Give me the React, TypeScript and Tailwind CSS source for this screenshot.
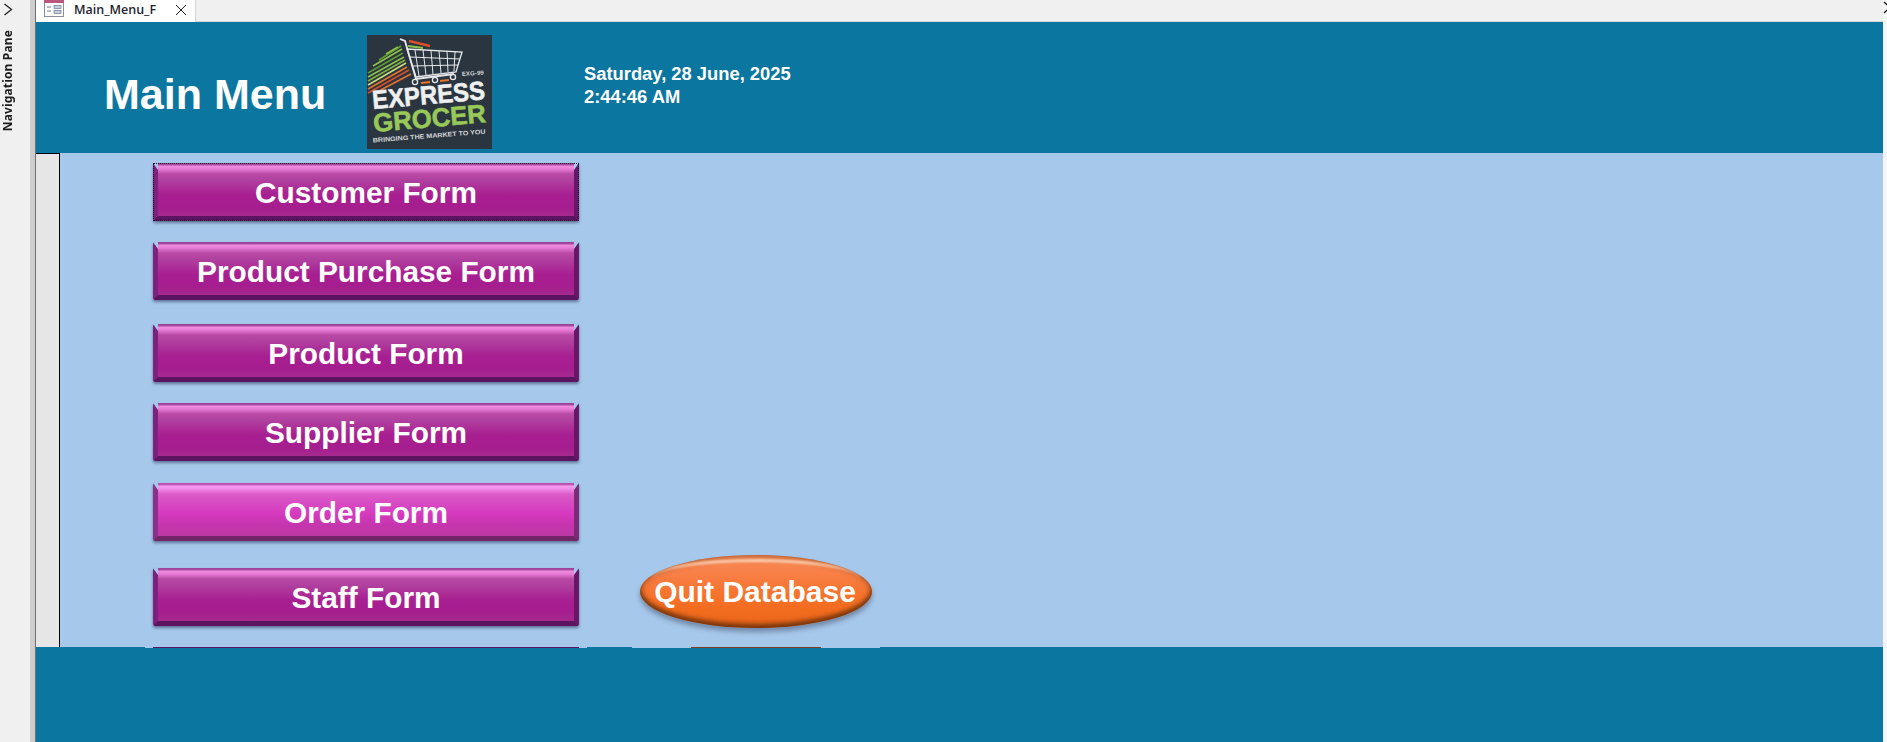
import React from "react";

const sans = "font-['Liberation_Sans',Arial,sans-serif]";

function Logo() {
  const stripes: [string, number, number, number, number][] = [
    ["#d9502a", 1, 58, 42, 35],
    ["#e8742c", 8, 58, 44, 39],
    ["#e8742c", 1, 54, 40, 32],
    ["#c9dc7a", 1, 50, 39, 28],
    ["#7fb23e", 1, 46, 38, 25],
    ["#8ec24a", 1, 42, 37, 22],
    ["#5f9a32", 1, 38, 36, 18],
    ["#8ec24a", 6, 31, 35, 14],
    ["#5f9a32", 12, 25, 34, 11],
    ["#8ec24a", 19, 19, 31, 12],
  ];
  return (
    <svg viewBox="0 0 125 114" className="w-[125px] h-[114px] ml-[41px] shrink-0">
      <rect width="125" height="114" fill="#2b3540" />
      <g className="blur-[0.3px]">
        {stripes.map(([c, a, b, d, e], i) => (
          <line key={i} x1={a} y1={b} x2={d} y2={e} stroke={c} strokeWidth="1.6" />
        ))}
        <g fill="none" stroke="#e6e9ea" strokeWidth="1.3">
          <path d="M33 4l5 2 11 38 38-5" strokeWidth="1.8" />
          <path d="M40 14l55 3-6 20-40 5z" />
          <path d="M48 15l4 26M56 15l3 25M64 16l2 23M72 16l2 22M80 16l1 21M88 17l-1 19M43 22l50 2M46 31l45-1" strokeWidth="1" />
          <circle cx="48" cy="47" r="2.6" />
          <circle cx="68" cy="45" r="2.6" />
          <circle cx="86" cy="42" r="2.6" />
        </g>
        <path d="M42 6l21 5" stroke="#d9502a" strokeWidth="2.6" />
        <path d="M41 11l15 2" stroke="#8ec24a" strokeWidth="2" />
        <path d="M54 48l9-1M73 46l9-1" stroke="#e8742c" strokeWidth="2" />
      </g>
      <text x="95" y="41" fontSize="6" fill="#d5d8da" fontFamily="Liberation Sans" fontWeight="700" textLength="22" transform="rotate(-4 95 41)">EXG-99</text>
      <text x="6" y="74" fontSize="26" fill="#eef0f0" stroke="#eef0f0" strokeWidth="0.6" fontFamily="Liberation Sans" fontWeight="700" textLength="113" lengthAdjust="spacingAndGlyphs" transform="rotate(-5 6 74)">EXPRESS</text>
      <text x="7" y="97" fontSize="26" fill="#97c858" stroke="#97c858" strokeWidth="0.6" fontFamily="Liberation Sans" fontWeight="700" textLength="113" lengthAdjust="spacingAndGlyphs" transform="rotate(-5 7 97)">GROCER</text>
      <text x="6" y="107.5" fontSize="6.4" fill="#d5d8da" fontFamily="Liberation Sans" fontWeight="700" textLength="113" lengthAdjust="spacingAndGlyphs" transform="rotate(-4.5 6 107.5)">BRINGING THE MARKET TO YOU</text>
    </svg>
  );
}

function MenuButton({ label, className, hot, focus }: { label: string; className: string; hot?: boolean; focus?: boolean }) {
  const skin = hot
    ? "bg-[linear-gradient(180deg,#b64fae_0,#c45abc_2px,#f6a0ee_3px,#f08ae6_6px,#dd5cca_11px,#d850c4_30%,#d63ac0_52%,#c635ae_72%,#b8399f_100%)] border-l-[#8b3088] border-r-[#7c2a78] border-b-[#722668]"
    : "bg-[linear-gradient(180deg,#9a3f96_0,#a84ca2_2px,#f08ee0_3px,#e77bd6_6px,#b84aa4_11px,#b0409f_30%,#a81f91_55%,#a51d8e_75%,#a6308f_100%)] border-l-[#7c227c] border-r-[#6a1668] border-b-[#5b1560]";
  return (
    <button
      className={`${className} ${skin} relative block w-[426px] h-[58px] ml-[117px] shrink-0 rounded-[2px] border-solid border-l-[5px] border-r-[5px] border-b-[5px] border-t-[7px] border-t-transparent bg-origin-border bg-clip-border shadow-[0_2px_3px_rgba(40,50,90,0.55)] text-white font-bold text-[29.8px] leading-none ${sans}`}
    >
      {label}
      {focus && <span className="absolute -top-[7px] -left-[5px] -right-[5px] -bottom-[5px] border border-dotted border-[#2a0428]" />}
    </button>
  );
}

export default function App() {
  return (
    <div className={`flex w-[1887px] h-[742px] overflow-hidden bg-[#f0f0f0] ${sans}`}>
      <aside className="w-[30px] shrink-0 flex flex-col items-start bg-[#f0f0f0]">
        <svg viewBox="0 0 10 13" className="w-[10px] h-[13px] ml-[3px] mt-[3px]">
          <path d="M1.5 1l7 5.5-7 5.5" fill="none" stroke="#222" strokeWidth="1.3" />
        </svg>
        <span className="mt-[14px] ml-[1px] [writing-mode:vertical-rl] rotate-180 text-[12px] tracking-[0.15px] leading-[14px] font-bold text-[#1c1c1c] font-['Noto_Sans','Liberation_Sans',sans-serif]">
          Navigation Pane
        </span>
      </aside>
      <div className="w-[5px] shrink-0 bg-[#cdcdcd]" />
      <div className="w-px shrink-0 bg-[#6f6f6f]" />
      <main className="flex-1 flex flex-col min-w-0">
        <div className="h-[22px] flex shrink-0 bg-[#f0f0f0] border-b border-[#d8d8d8]">
          <div className="w-[160px] h-[22px] bg-white border-r border-[#d4d4d4] flex items-center">
            <svg viewBox="0 0 20 17" className="w-[20px] h-[17px] ml-[8px] self-start">
              <rect x="0.5" y="0" width="19" height="16.5" fill="#fff" stroke="#8a8fa0" />
              <rect x="0" y="0" width="20" height="3" fill="#b9577f" />
              <path d="M3 7h4M3 11h4" stroke="#6a7a96" />
              <rect x="10" y="5.5" width="7" height="3" fill="#c5cfe0" stroke="#68768f" strokeWidth="0.7" />
              <rect x="10" y="10.5" width="7" height="3" fill="#c5cfe0" stroke="#68768f" strokeWidth="0.7" />
            </svg>
            <span className="ml-[10px] w-[86px] whitespace-nowrap text-[12.5px] font-semibold text-[#1f1f30] font-['Open_Sans','Noto_Sans',sans-serif] leading-none pb-[2px]">
              Main_Menu_F
            </span>
            <svg viewBox="0 0 12 12" className="w-[12px] h-[12px] ml-[15px] mb-[2px]">
              <path d="M1 1l10 10M11 1L1 11" stroke="#222" strokeWidth="1" />
            </svg>
          </div>
        </div>
        <header className="h-[131px] shrink-0 flex items-start bg-[#0b76a0]">
          <h1 className="ml-[68px] mt-[47px] w-[222px] whitespace-nowrap text-[43px] leading-[50px] font-bold text-white">Main Menu</h1>
          <div className="mt-[13px]"><Logo /></div>
          <div className="ml-[92px] mt-[40px] text-[18.35px] leading-[23px] font-bold text-white whitespace-nowrap">
            <div>Saturday, 28 June, 2025</div>
            <div>2:44:46 AM</div>
          </div>
        </header>
        <section className="relative h-[494px] shrink-0 overflow-hidden bg-[#a6c8ea] flex flex-col">
          <div className="absolute left-0 top-0 w-[24px] h-full bg-[#e6e6e6] border-t border-r border-black" />
          <MenuButton label="Customer Form" className="mt-[10px]" focus />
          <MenuButton label="Product Purchase Form" className="mt-[21px]" />
          <MenuButton label="Product Form" className="mt-[24px]" />
          <MenuButton label="Supplier Form" className="mt-[21px]" />
          <MenuButton label="Order Form" className="mt-[22px]" hot />
          <MenuButton label="Staff Form" className="mt-[27px]" />
          <div className="absolute left-[604px] top-[402px] w-[232px] h-[73px] rounded-[50%] flex items-center justify-center overflow-hidden bg-[linear-gradient(180deg,#f58a55_0%,#f98048_25%,#f6752f_50%,#f26c1e_75%,#e8661c_100%)] shadow-[0_4px_5px_rgba(50,60,90,0.45),inset_0_-4px_4px_rgba(100,45,10,0.75),inset_0_0_7px_rgba(120,55,15,0.75)]">
            <span className="absolute left-[12px] right-[12px] top-[4px] h-[40px] rounded-[50%] border-t-[3px] border-[#ffe6cf]/80 blur-[1px]" />
            <span className="relative text-white font-bold text-[30px] leading-none whitespace-nowrap -ml-[2px]">Quit Database</span>
          </div>
        </section>
        <footer className="relative flex-1 bg-[#0b76a0]">
          <div className="absolute left-[109px] top-0 w-[442px] h-px bg-[#a6c8ea] flex justify-center">
            <div className="w-[426px] h-px bg-[#5a1560]" />
          </div>
          <div className="absolute left-[596px] top-0 w-[248px] h-px bg-[#a6c8ea] flex justify-center">
            <div className="w-[130px] h-px bg-[#7a4020]" />
          </div>
        </footer>
      </main>
      <div className="w-[4px] shrink-0 bg-[#f6f6f6] overflow-hidden">
        <svg viewBox="0 0 8 13" className="w-[8px] h-[13px] mt-px">
          <path d="M1 1l6 5.5-6 5.5" fill="none" stroke="#222" strokeWidth="1.3" />
        </svg>
      </div>
    </div>
  );
}
